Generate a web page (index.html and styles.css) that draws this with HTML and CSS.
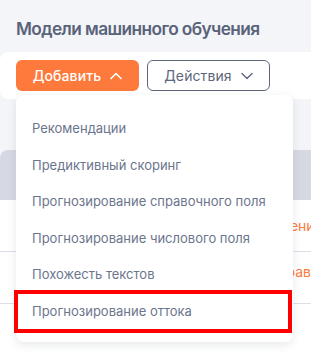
FILE: index.html
```html
<!DOCTYPE html>
<html lang="ru">
<head>
<meta charset="utf-8">
<link rel="stylesheet" href="styles.css">
</head>
<body>
<div class="page">
  <h1 class="title">Модели машинного обучения</h1>
  <div class="toolbar">
    <button class="btn btn-primary">Добавить
      <svg class="chev" width="12" height="8" viewBox="0 0 12 8"><path d="M1 6.5 L6 1.5 L11 6.5" fill="none" stroke="currentColor" stroke-width="1.6" stroke-linecap="round" stroke-linejoin="round"/></svg>
    </button>
    <button class="btn btn-outline">Действия
      <svg class="chev" width="12" height="8" viewBox="0 0 12 8"><path d="M1 1.5 L6 6.5 L11 1.5" fill="none" stroke="currentColor" stroke-width="1.4" stroke-linecap="round" stroke-linejoin="round"/></svg>
    </button>
  </div>
  <div class="table">
    <div class="thead"></div>
    <div class="row row-1"><span class="link link-1">Обучение модели</span></div>
    <div class="row row-2"><span class="link link-2">Справ. поле</span></div>
    <div class="row row-last"></div>
  </div>
  <div class="menu">
    <div class="item">Рекомендации</div>
    <div class="item">Предиктивный скоринг</div>
    <div class="item">Прогнозирование справочного поля</div>
    <div class="item">Прогнозирование числового поля</div>
    <div class="item">Похожесть текстов</div>
    <div class="item item-marked">Прогнозирование оттока</div>
  </div>
</div>
</body>
</html>
```

FILE: styles.css
```css
* { box-sizing: border-box; }
html, body { margin: 0; padding: 0; }
body {
  background: #f4f5f9;
  font-family: Inter, "Noto Sans", sans-serif;
  width: 311px;
  height: 356px;
  overflow: hidden;
}
.page { position: relative; }
.title {
  margin: 0;
  padding: 17px 0 0 16px;
  height: 41px;
  font-size: 17.3px;
  line-height: 24px;
  font-weight: 600;
  color: #5a6379;
  letter-spacing: -0.6px;
}
.toolbar {
  margin-top: 11px;
  height: 47px;
  background: #fff;
  border-radius: 8px 0 0 8px;
  padding: 8px 16px;
  display: flex;
  gap: 8px;
}
.btn {
  height: 31px;
  width: 123px;
  border-radius: 6px;
  font-family: inherit;
  font-size: 14px;
  font-weight: 500;
  display: flex;
  align-items: center;
  justify-content: center;
  gap: 9px;
  padding: 0;
  letter-spacing: 0.1px;
}
.btn-primary {
  background: #fd7a3c;
  color: #fff;
  border: none;
}
.btn-outline {
  background: #fff;
  color: #5d667c;
  border: 1px solid #5d667c;
  font-weight: 400;
}
.chev { display: block; }
.table { margin-top: 51px; }
.thead {
  height: 50px;
  background: #d6d9e2;
  border-radius: 8px 0 0 0;
}
.row {
  height: 52px;
  background: #fff;
  border-bottom: 1px solid #dcdfe8;
  position: relative;
  overflow: hidden;
  white-space: nowrap;
}
.row-last { border-bottom: none; }
.link {
  color: #fd7a3c;
  font-size: 14px;
  display: block;
}
.link-1 { padding: 17px 0 0 255px; }
.link-2 { padding: 11px 0 0 268px; }
.menu {
  position: absolute;
  left: 16px;
  top: 95px;
  width: 277px;
  height: 247px;
  background: #fff;
  border-radius: 8px;
  box-shadow: 0 3px 10px rgba(60, 70, 100, 0.12);
  padding: 15px 0 0 0;
  display: flex;
  flex-direction: column;
}
.item {
  height: 36.5px;
  line-height: 36px;
  padding-left: 16px;
  font-size: 13px;
  color: #6b758c;
  white-space: nowrap;
}
.item-marked {
  position: relative;
}
.item-marked::after {
  content: "";
  position: absolute;
  left: -2px;
  right: 1px;
  top: -3px;
  bottom: -4px;
  border: 4px solid #ff0000;
}
```
